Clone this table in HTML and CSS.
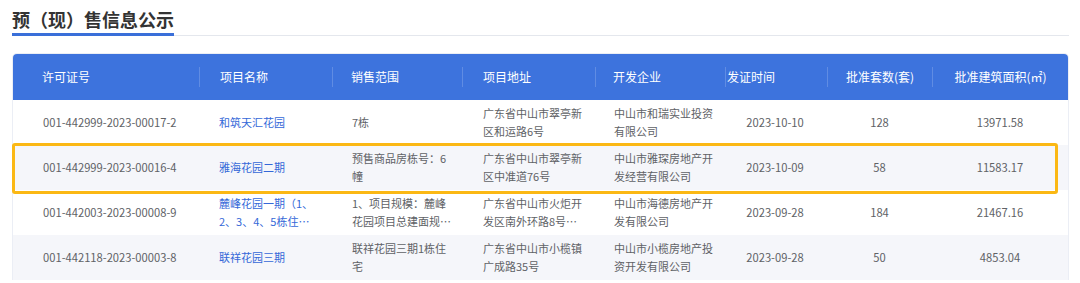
FILE: index.html
```html
<!DOCTYPE html>
<html lang="zh-CN">
<head>
<meta charset="utf-8">
<title>预（现）售信息公示</title>
<link rel="stylesheet" href="styles.css">
</head>
<body>
<div class="page">
  <div class="tabs">
    <div class="tab active">预（现）售信息公示</div>
    <div class="tab-rest"></div>
  </div>
  <div class="table-wrap">
    <div class="table">
      <div class="thead">
        <div class="th c1">许可证号</div>
        <div class="th c2">项目名称</div>
        <div class="th c3">销售范围</div>
        <div class="th c4">项目地址</div>
        <div class="th c5">开发企业</div>
        <div class="th c6">发证时间</div>
        <div class="th c7">批准套数(套)</div>
        <div class="th c8">批准建筑面积(㎡)</div>
      </div>
      <div class="tr">
        <div class="td c1">001-442999-2023-00017-2</div>
        <div class="td c2"><span class="link clamp">和筑天汇花园</span></div>
        <div class="td c3"><span class="clamp">7栋</span></div>
        <div class="td c4"><span class="clamp">广东省中山市翠亭新区和运路6号</span></div>
        <div class="td c5"><span class="clamp">中山市和瑞实业投资有限公司</span></div>
        <div class="td c6">2023-10-10</div>
        <div class="td c7">128</div>
        <div class="td c8">13971.58</div>
      </div>
      <div class="tr stripe">
        <div class="td c1">001-442999-2023-00016-4</div>
        <div class="td c2"><span class="link clamp">雅海花园二期</span></div>
        <div class="td c3"><span class="clamp">预售商品房栋号：6幢</span></div>
        <div class="td c4"><span class="clamp">广东省中山市翠亭新区中准道76号</span></div>
        <div class="td c5"><span class="clamp">中山市雅琛房地产开发经营有限公司</span></div>
        <div class="td c6">2023-10-09</div>
        <div class="td c7">58</div>
        <div class="td c8">11583.17</div>
      </div>
      <div class="tr">
        <div class="td c1">001-442003-2023-00008-9</div>
        <div class="td c2"><span class="link clamp">麓峰花园一期（1、2、3、4、5栋住宅及配套商业）</span></div>
        <div class="td c3"><span class="clamp">1、项目规模：麓峰花园项目总建面规划约为十万平方米</span></div>
        <div class="td c4"><span class="clamp">广东省中山市火炬开发区南外环路8号之一</span></div>
        <div class="td c5"><span class="clamp">中山市海德房地产开发有限公司</span></div>
        <div class="td c6">2023-09-28</div>
        <div class="td c7">184</div>
        <div class="td c8">21467.16</div>
      </div>
      <div class="tr stripe">
        <div class="td c1">001-442118-2023-00003-8</div>
        <div class="td c2"><span class="link clamp">联祥花园三期</span></div>
        <div class="td c3"><span class="clamp">联祥花园三期1栋住宅</span></div>
        <div class="td c4"><span class="clamp">广东省中山市小榄镇广成路35号</span></div>
        <div class="td c5"><span class="clamp">中山市小榄房地产投资开发有限公司</span></div>
        <div class="td c6">2023-09-28</div>
        <div class="td c7">50</div>
        <div class="td c8">4853.04</div>
      </div>
    </div>
    <div class="highlight"></div>
  </div>
</div>
</body>
</html>
```

FILE: styles.css
```css
* { box-sizing: border-box; }
html, body { margin: 0; padding: 0; background: #fff; }
body {
  font-family: "Noto Sans CJK SC", "Noto Sans", sans-serif;
  color: #606266;
}
.page { padding: 0 11px 0 12px; }

.tabs {
  display: flex;
  align-items: flex-end;
}
.tab {
  font-size: 18px;
  font-weight: bold;
  color: #333;
  line-height: 24px;
  padding: 7px 0 2px;
  white-space: nowrap;
}
.tab.active { border-bottom: 3px solid #3a6fd9; }
.tab-rest {
  flex: 1;
  border-bottom: 1px solid #e4e7ed;
}

.table-wrap {
  position: relative;
  margin-top: 17px;
}
.table {
  border: 1px solid #ebeef5;
  border-bottom: none;
  border-radius: 5px 5px 0 0;
  overflow: hidden;
}
.thead, .tr {
  display: grid;
  grid-template-columns: 186px 133px 130px 133px 130px 102px 105px 1fr;
  align-items: center;
}
.thead {
  background: #3d73dd;
  height: 46px;
  color: #fff;
  font-size: 12px;
}
.th {
  height: 20px;
  line-height: 20px;
  white-space: nowrap;
  border-left: 1px solid rgba(255,255,255,0.18);
}
.th.c1 { border-left: none; padding-left: 29px; }
.th.c2 { padding-left: 20px; }
.th.c3 { padding-left: 18px; }
.th.c4 { padding-left: 20px; }
.th.c5 { padding-left: 17px; }
.th.c6 { padding-left: 1px; }
.th.c7, .th.c8 { text-align: center; }

.tr {
  height: 45px;
  font-size: 11px;
  line-height: 17.5px;
  background: #fff;
}
.tr.stripe { background: #f5f6fa; }
.td { min-width: 0; }
.td.c1 { padding-left: 30px; white-space: nowrap; font-size: 11.2px; }
.td.c2 { padding-left: 20px; padding-right: 15px; }
.td.c3 { padding-left: 20px; padding-right: 10px; }
.td.c4 { padding-left: 21px; padding-right: 7px; }
.td.c5 { padding-left: 19px; padding-right: 6px; }
.td.c6, .td.c7, .td.c8 { text-align: center; font-size: 11.2px; }
.td.c6 { padding-right: 2px; }

.clamp {
  display: -webkit-box;
  -webkit-line-clamp: 2;
  -webkit-box-orient: vertical;
  overflow: hidden;
}
.link { color: #3468d8; }

.highlight {
  position: absolute;
  left: 0;
  top: 90px;
  width: 1046px;
  height: 51px;
  border: 3px solid #fbb814;
  border-radius: 3px;
  pointer-events: none;
}
```
